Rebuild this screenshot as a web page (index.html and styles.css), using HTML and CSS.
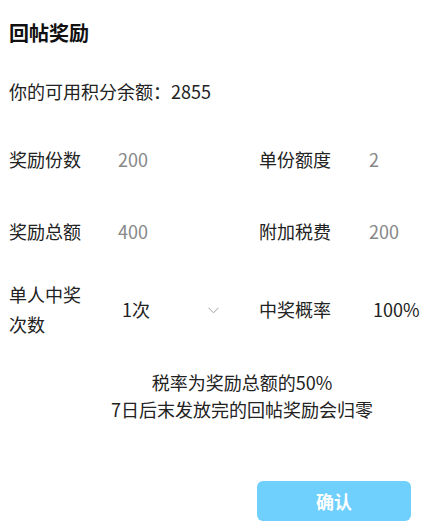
FILE: index.html
```html
<!DOCTYPE html>
<html lang="zh-CN">
<head>
<meta charset="utf-8">
<title>回帖奖励</title>
<link rel="stylesheet" href="styles.css">
</head>
<body>
<div class="page">
  <div class="title">回帖奖励</div>
  <div class="balance">你的可用积分余额：2855</div>
  <div class="form">
    <div class="row">
      <div class="label">奖励份数</div>
      <div class="value muted">200</div>
      <div class="label">单份额度</div>
      <div class="value muted">2</div>
    </div>
    <div class="row">
      <div class="label">奖励总额</div>
      <div class="value muted">400</div>
      <div class="label">附加税费</div>
      <div class="value muted">200</div>
    </div>
    <div class="row row-tall">
      <div class="label label-wrap">单人中奖<br>次数</div>
      <div class="value select">
        <span>1次</span>
        <svg class="chevron" width="11" height="7" viewBox="0 0 11 7"><polyline points="0.5,0.8 5.5,5.8 10.5,0.8" fill="none" stroke="#a0a0a0" stroke-width="1"/></svg>
      </div>
      <div class="label">中奖概率</div>
      <div class="value strong">100%</div>
    </div>
  </div>
  <div class="notes">
    <div>税率为奖励总额的50%</div>
    <div>7日后末发放完的回帖奖励会归零</div>
  </div>
  <div class="actions">
    <button class="confirm" type="button">确认</button>
  </div>
</div>
</body>
</html>
```
FILE: styles.css
```css
html, body {
  margin: 0;
  padding: 0;
  background: #ffffff;
}
body {
  font-family: "Noto Sans CJK SC", "Noto Sans", sans-serif;
  font-size: 18px;
  color: #222222;
}
.page {
  padding: 19px 9px 0 9px;
}
.title {
  font-size: 20px;
  font-weight: bold;
  color: #111111;
  line-height: 28px;
}
.balance {
  margin-top: 30px;
  line-height: 28px;
}
.form {
  margin-top: 30px;
  display: flex;
  flex-direction: column;
  gap: 24px;
}
.row {
  display: grid;
  grid-template-columns: 109px 141px 110px 1fr;
  align-items: center;
  min-height: 48px;
  line-height: 28px;
}
.row-tall {
  min-height: 60px;
}
.label-wrap {
  line-height: 30px;
}
.value.muted {
  color: #888888;
}
.value.strong {
  color: #222222;
  padding-left: 4px;
}
.select {
  display: flex;
  align-items: center;
  justify-content: space-between;
  padding-left: 4px;
  width: 97px;
  color: #222222;
}
.chevron {
  display: block;
  margin-top: 2px;
}
.notes {
  margin-top: 30px;
  padding-left: 42px;
  text-align: center;
  line-height: 27px;
  color: #222222;
}
.actions {
  margin-top: 58px;
  padding-left: 248px;
}
.confirm {
  display: block;
  width: 154px;
  height: 40px;
  border: none;
  border-radius: 6px;
  background: #70d0fd;
  color: #ffffff;
  font-family: inherit;
  font-size: 18px;
  font-weight: bold;
  padding: 0;
}
```
